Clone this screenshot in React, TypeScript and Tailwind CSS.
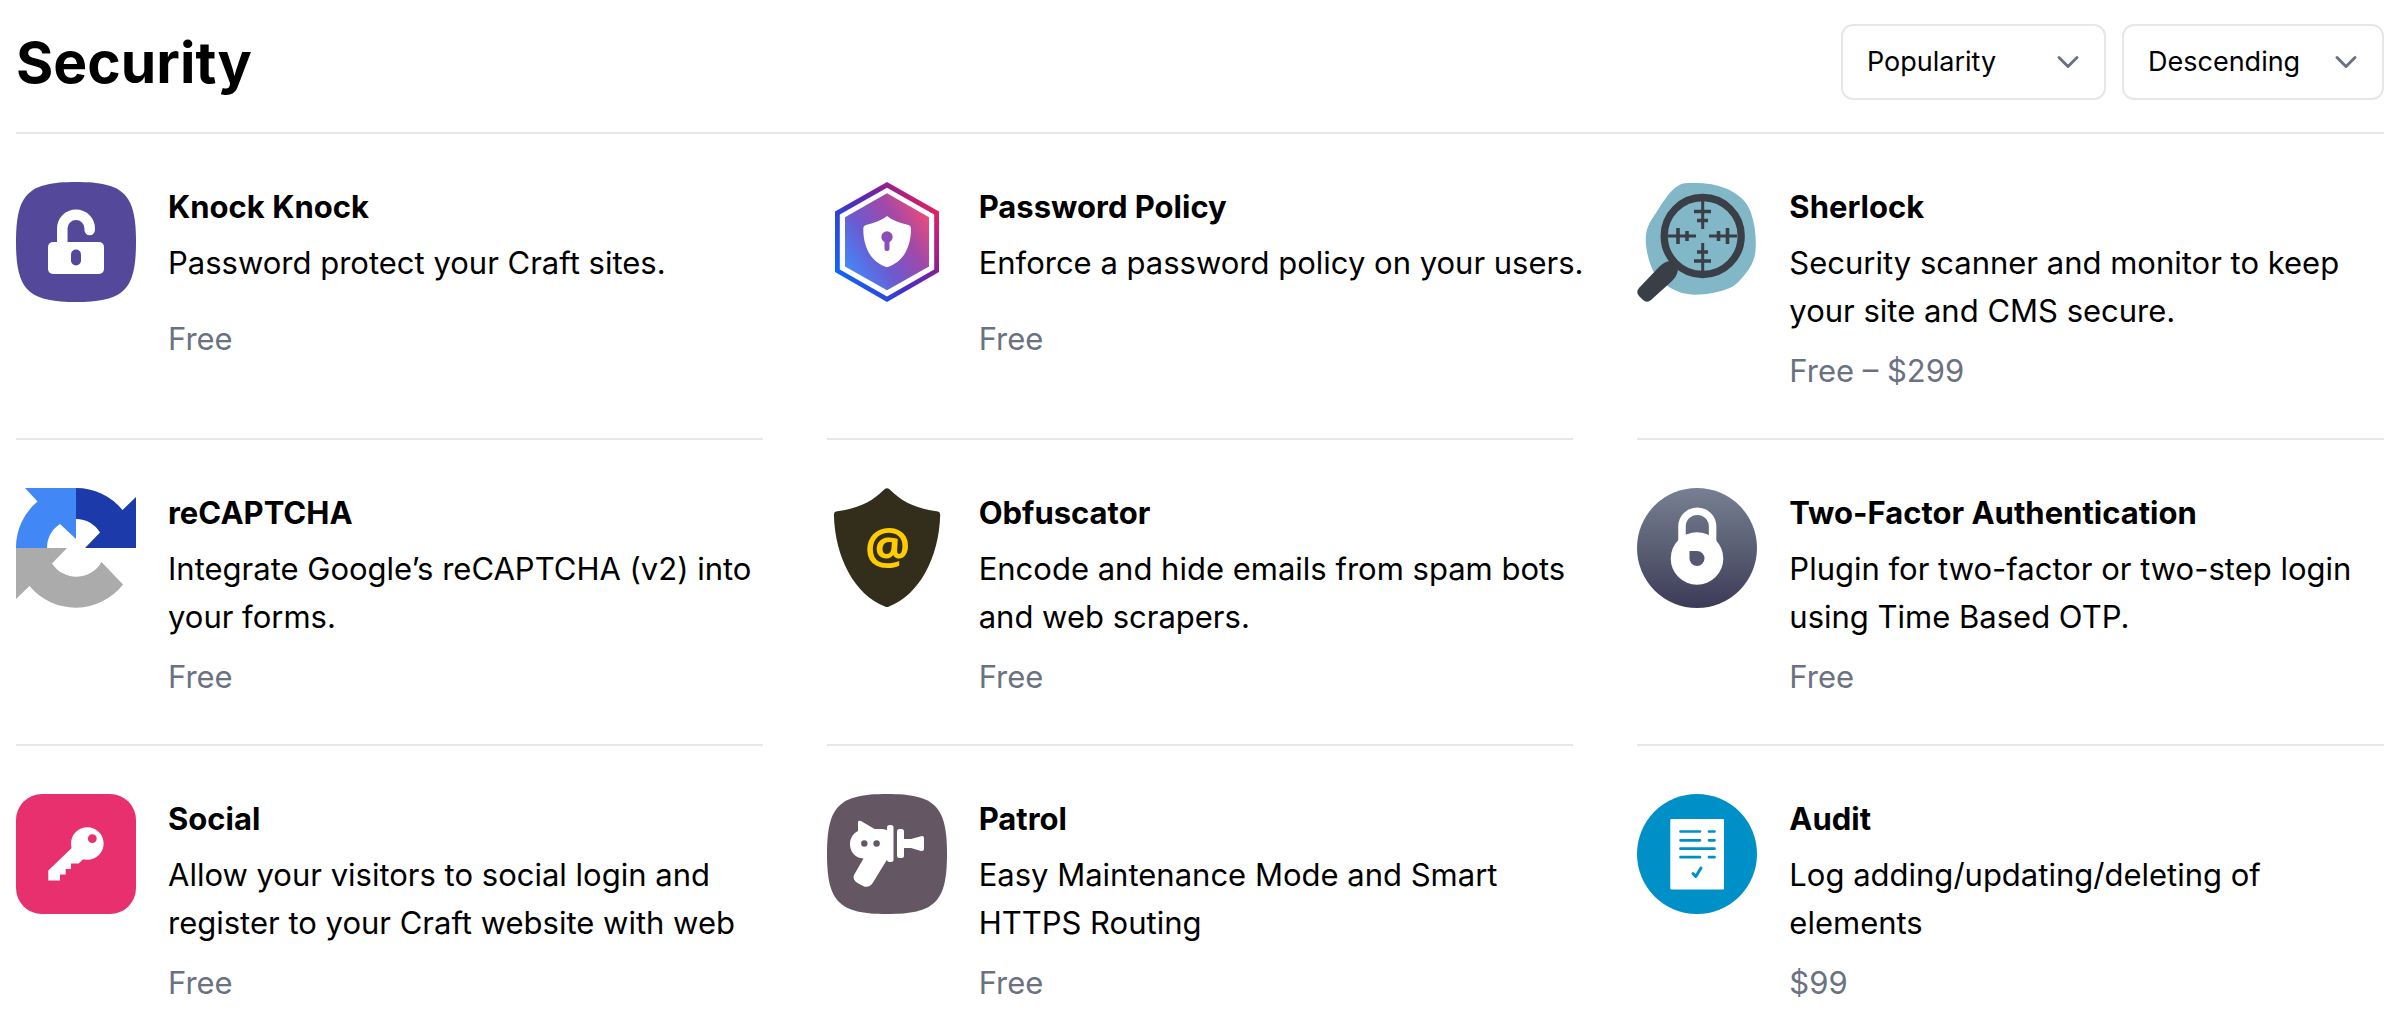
import { useState } from 'react'
import type { ReactNode } from 'react'
import { ChevronDown } from 'lucide-react'
import clsx from 'clsx'

interface Plugin {
  name: string
  description: string
  price: string
  icon: ReactNode
}

const SQUIRCLE = 'M60 0C108 0 120 12 120 60S108 120 60 120S0 108 0 60S12 0 60 0Z'

function KnockKnockIcon() {
  return (
    <svg viewBox="0 0 120 120" className="size-full" aria-hidden="true">
      <path d={SQUIRCLE} fill="#54489a" />
      <path d="M46.3 62V46.5a13.7 13.7 0 0 1 27.4 0V48" fill="none" stroke="#fff" strokeWidth="10.5" strokeLinecap="round" />
      <rect x="32" y="60" width="56" height="32" rx="5" fill="#fff" />
      <rect x="55" y="67.5" width="10" height="16" rx="5" fill="#54489a" />
    </svg>
  )
}

function PasswordPolicyIcon() {
  return (
    <svg viewBox="0 0 120 120" className="size-full" aria-hidden="true">
      <defs>
        <linearGradient id="policy-outer" x1="8" y1="95" x2="112" y2="28" gradientUnits="userSpaceOnUse">
          <stop offset="0" stopColor="#0a6cff" />
          <stop offset="0.4" stopColor="#3f33c8" />
          <stop offset="0.68" stopColor="#7d1f9c" />
          <stop offset="1" stopColor="#e8205f" />
        </linearGradient>
        <linearGradient id="policy-inner" x1="20" y1="88" x2="100" y2="34" gradientUnits="userSpaceOnUse">
          <stop offset="0" stopColor="#4488fb" />
          <stop offset="0.35" stopColor="#6a5bd0" />
          <stop offset="0.7" stopColor="#a049a9" />
          <stop offset="1" stopColor="#e84c7c" />
        </linearGradient>
      </defs>
      <path d="M60 0L112 29.5V90L60 120L8 90V29.5Z" fill="url(#policy-outer)" />
      <path d="M60 5.7L107.2 32.5V87.5L60 114.5L12.8 87.5V32.5Z" fill="#fff" />
      <path d="M60 11.3L102 35.2V84.6L60 108.3L18 84.6V35.2Z" fill="url(#policy-inner)" />
      <path d="M60 34C65 38.500 74 41 81.500 43C83.500 43.700 84 45 84 47C84 64 77 80 60 85.300C43 80 36.300 64 36.300 47C36.300 45 37 43.700 39 43C46 41 55 38.500 60 34Z" fill="#fff" />
      <circle cx="60" cy="55" r="5.7" fill="#8b4db8" />
      <path d="M60 56V66.500" stroke="#8b4db8" strokeWidth="5" strokeLinecap="round" />
    </svg>
  )
}

function SherlockIcon() {
  return (
    <svg viewBox="0 0 120 120" className="size-full" aria-hidden="true">
      <path
        d="M46 1.500C52 .8 60 1 66 1.300C78 2 88 5.500 96 10C105 15 111 22 114 31C118 42 119.500 56 118.500 69C117 81 112 88 105 96C100 102 96 105 90 107C80 111 68 112.700 58 112.700C48 112.500 40 110 32 105C22 99 17 92 14 84C10 73 8 62 9 53C10 44 14 38 19 31C25 22 34 5 46 1.500Z"
        fill="#82b7c7"
      />
      <g stroke="#3a3e47" fill="none">
        <circle cx="65.700" cy="54" r="38.500" strokeWidth="7.300" />
        <path d="M65.700 19V47M65.700 61V89M31 54H59M72 54H100" strokeWidth="3" />
        <path
          d="M57 29.500H74M60 38.500H71M60 70H71M57 79H74M41 46V62M50 49V59M81.500 49V59M90.500 46V62"
          strokeWidth="3.600"
        />
      </g>
      <path
        d="M33 79L41 88C40 93 38 96 35 99L14 118Q10 121.500 6 118L2 114Q-1.500 110 2 106L22 85C26 81 29 79.500 33 79Z"
        fill="#3a3e47"
      />
    </svg>
  )
}

function RecaptchaIcon() {
  return (
    <svg viewBox="0 0 120 120" className="size-full" aria-hidden="true">
      <path d="M9 0H60V51L44 36A29 29 0 0 0 31 60H0A60 60 0 0 1 21.500 13.500Z" fill="#4188f6" />
      <path d="M60 0A60 60 0 0 1 106.500 22L120 9V60H69L84 44.500A29 29 0 0 0 60 31Z" fill="#1c3aa9" />
      <path d="M0 60H51L36 75.500A29 29 0 0 0 85.500 74L107 96.500A60 60 0 0 1 13.500 98L0 111Z" fill="#ababab" />
    </svg>
  )
}

function ObfuscatorIcon() {
  return (
    <svg viewBox="0 0 120 120" className="size-full" aria-hidden="true">
      <path
        d="M57.500 1.300Q60 -.8 62.500 1.300C75 14 90 21 111 23.500Q113.300 24 113.200 27C112 70 92 107 62 118.500Q60 119.500 58 118.500C28 107 8 70 6.900 27Q6.800 24 9 23.500C30 21 45 14 57.500 1.300Z"
        fill="#332e1c"
      />
      <text x="60.500" y="76" textAnchor="middle" fontSize="51" className="fill-[#ffcc00] font-['Open_Sans',sans-serif] font-bold">
        @
      </text>
    </svg>
  )
}

function TwoFactorIcon() {
  return (
    <svg viewBox="0 0 120 120" className="size-full" aria-hidden="true">
      <defs>
        <linearGradient id="two-factor" x1="0" y1="0" x2="0" y2="1">
          <stop offset="0" stopColor="#787f92" />
          <stop offset="0.500" stopColor="#5a5f74" />
          <stop offset="1" stopColor="#3d3a58" />
        </linearGradient>
      </defs>
      <circle cx="60" cy="60" r="60" fill="url(#two-factor)" />
      <path d="M45 58V38.500a15.300 15.300 0 0 1 30.600 0V58" fill="none" stroke="#fff" strokeWidth="7.500" />
      <circle cx="60" cy="70.500" r="26.300" fill="#fff" />
      <path d="M52.500 63H60A7.500 7.500 0 1 1 52.500 70.500Z" fill="#555870" />
    </svg>
  )
}

function SocialIcon() {
  return (
    <svg viewBox="0 0 120 120" className="size-full" aria-hidden="true">
      <rect width="120" height="120" rx="26" fill="#e8306e" />
      <circle cx="71.300" cy="49.500" r="16.300" fill="#fff" />
      <path d="M55.700 54L32.300 76.500V86.500H44V80.500H49.700V75H55V69.500H62.500L67.500 65L70 50Z" fill="#fff" />
      <circle cx="76.300" cy="44.700" r="4.400" fill="#e8306e" />
    </svg>
  )
}

function PatrolIcon() {
  return (
    <svg viewBox="0 0 120 120" className="size-full" aria-hidden="true">
      <path d={SQUIRCLE} fill="#645763" />
      <g fill="#fff">
        <path d="M31 28Q31.500 26 34 27L47.500 35H55Q58 35 61 36.500V64L46 88.500Q42.500 94 37 92.500L30.500 89Q25 85.500 27 81L36.500 64.500C28 64 23 58 23 50C23 44 26.500 39 31 37Z" />
        <rect x="60" y="31" width="6.500" height="37" rx="2.500" />
        <rect x="70" y="35" width="7" height="29" rx="2.500" />
        <path d="M76 45H84L94 42.200Q97 41.500 97 44V55Q97 57.500 94 57L84 54H76Z" />
      </g>
      <circle cx="37.300" cy="49.500" r="3.200" fill="#645763" />
      <circle cx="49.600" cy="49.500" r="3.200" fill="#645763" />
    </svg>
  )
}

function AuditIcon() {
  return (
    <svg viewBox="0 0 120 120" className="size-full" aria-hidden="true">
      <circle cx="60" cy="60" r="60" fill="#0090c8" />
      <rect x="33.300" y="25" width="53.700" height="70.500" rx="1" fill="#fff" />
      <g fill="none" stroke="#0090c8" strokeLinecap="round" strokeLinejoin="round">
        <path d="M43.500 37.500H63M72 37.500H77.500M43.500 46.300H63M72 46.300H77.500M43.500 54.700H77.500M43.500 63.200H63M72 63.200H77.500" strokeWidth="2.700" />
        <path d="M56 79.500L58.800 82.500L64 74" strokeWidth="3" />
      </g>
    </svg>
  )
}

const PLUGINS: Plugin[] = [
  { name: 'Knock Knock', description: 'Password protect your Craft sites.', price: 'Free', icon: <KnockKnockIcon /> },
  { name: 'Password Policy', description: 'Enforce a password policy on your users.', price: 'Free', icon: <PasswordPolicyIcon /> },
  { name: 'Sherlock', description: 'Security scanner and monitor to keep your site and CMS secure.', price: 'Free – $299', icon: <SherlockIcon /> },
  { name: 'reCAPTCHA', description: 'Integrate Google’s reCAPTCHA (v2) into your forms.', price: 'Free', icon: <RecaptchaIcon /> },
  { name: 'Obfuscator', description: 'Encode and hide emails from spam bots and web scrapers.', price: 'Free', icon: <ObfuscatorIcon /> },
  { name: 'Two-Factor Authentication', description: 'Plugin for two-factor or two-step login using Time Based OTP.', price: 'Free', icon: <TwoFactorIcon /> },
  { name: 'Social', description: 'Allow your visitors to social login and register to your Craft website with web', price: 'Free', icon: <SocialIcon /> },
  { name: 'Patrol', description: 'Easy Maintenance Mode and Smart HTTPS Routing', price: 'Free', icon: <PatrolIcon /> },
  { name: 'Audit', description: 'Log adding/updating/deleting of elements', price: '$99', icon: <AuditIcon /> },
]

interface SortSelectProps {
  label: string
  value: string
  options: string[]
  onChange: (value: string) => void
  className?: string
}

function SortSelect({ label, value, options, onChange, className }: SortSelectProps) {
  return (
    <div className={clsx('relative', className)}>
      <select
        aria-label={label}
        value={value}
        onChange={(e) => onChange(e.target.value)}
        className="h-19 w-full appearance-none rounded-xl border-2 border-gray-200 bg-white pl-6 pr-14 text-[27px] text-black"
      >
        {options.map((option) => (
          <option key={option}>{option}</option>
        ))}
      </select>
      <ChevronDown className="pointer-events-none absolute top-5 right-5 size-9 text-gray-500" />
    </div>
  )
}

function PluginCard({ plugin }: { plugin: Plugin }) {
  return (
    <article className="flex gap-8 border-b-2 border-gray-200 pt-12 pb-10">
      <div className="size-30 shrink-0">{plugin.icon}</div>
      <div className="-mr-4 min-w-0 flex-1 pt-px text-[31px] leading-12">
        <h2 className="font-bold">{plugin.name}</h2>
        <p className="mt-2 line-clamp-2 min-h-16">{plugin.description}</p>
        <p className="mt-3 text-gray-500">{plugin.price}</p>
      </div>
    </article>
  )
}

export default function App() {
  const [sort, setSort] = useState('Popularity')
  const [direction, setDirection] = useState('Descending')

  return (
    <main className="h-screen overflow-hidden bg-white pr-3 pl-4 font-[Inter,sans-serif] text-black">
      <header className="flex items-center justify-between border-b-2 border-gray-200 pt-6 pb-8">
        <h1 className="text-[57px] leading-none font-bold">Security</h1>
        <div className="flex gap-4">
          <SortSelect
            label="Sort by"
            value={sort}
            options={['Popularity', 'Name']}
            onChange={setSort}
            className="w-[265px]"
          />
          <SortSelect
            label="Direction"
            value={direction}
            options={['Descending', 'Ascending']}
            onChange={setDirection}
            className="w-[262px]"
          />
        </div>
      </header>

      <div className="grid auto-rows-[306px] grid-cols-3 gap-x-16">
        {PLUGINS.map((plugin) => (
          <PluginCard key={plugin.name} plugin={plugin} />
        ))}
      </div>
    </main>
  )
}
